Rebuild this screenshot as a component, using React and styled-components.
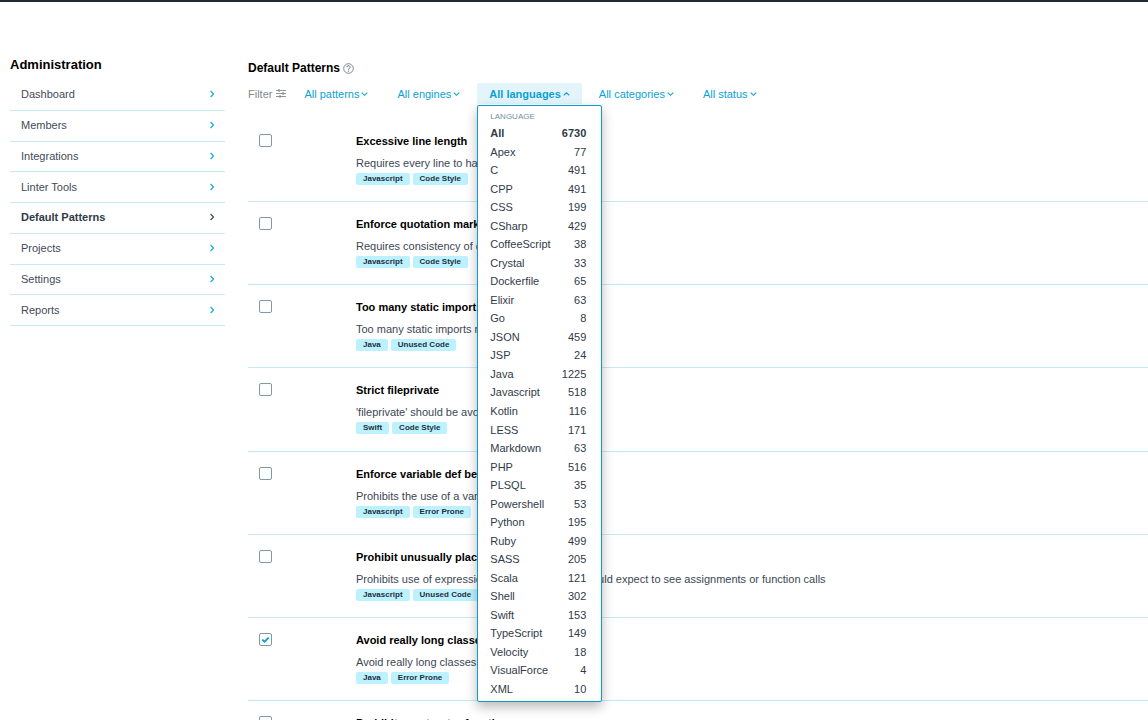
import React, { useState } from "react";
import styled, { createGlobalStyle } from "styled-components";

const GlobalStyle = createGlobalStyle`
  *, *::before, *::after { box-sizing: border-box; }
  html { scrollbar-width: none; }
  body {
    margin: 0;
    background: #fff;
    color: #3b4754;
    font-family: "Liberation Sans", Arial, Helvetica, sans-serif;
    font-size: 11px;
    line-height: 14px;
  }
`;

const Page = styled.div`
  border-top: 2px solid #1c2b36;
  display: flex;
  gap: 23px;
  padding: 54px 0 0 10px;
`;

const Sidebar = styled.aside`
  flex: 0 0 215px;
`;

const SidebarTitle = styled.h1`
  margin: 0 0 7px;
  color: #000;
  font-size: 13px;
  line-height: 17px;
`;

const Nav = styled.nav`
  display: grid;
  grid-auto-rows: 1fr;
  min-height: 246px;
`;

const NavLink = styled.a`
  display: flex;
  align-items: center;
  justify-content: space-between;
  padding: 0 10px 1px 11px;
  border-bottom: 1px solid #c8e9f6;
  color: ${(p) => (p.$active ? "#2e3b47" : "#3f4b58")};
  font-weight: ${(p) => (p.$active ? 700 : 400)};
  text-decoration: none;

  svg { color: ${(p) => (p.$active ? "#3f4b58" : "#18a9d8")}; }
`;

const Main = styled.main`
  flex: 1;
  min-width: 0;
`;

const MainHeader = styled.header`
  display: flex;
  align-items: center;
  gap: 3px;
  margin: 4px 0 7px;
`;

const MainTitle = styled.h2`
  margin: 0;
  color: #000;
  font-size: 12px;
  line-height: 16px;
`;

const HelpButton = styled.button`
  display: flex;
  padding: 0;
  border: 0;
  background: none;
  color: #5f6b75;
`;

const Filters = styled.div`
  display: flex;
  align-items: center;
  gap: 5px;
  margin-bottom: 15px;
`;

const FilterLabel = styled.span`
  display: flex;
  align-items: center;
  gap: 4px;
  margin-right: 1px;
  color: #84898e;
`;

const FilterSlot = styled.div`
  position: relative;
`;

const FilterButton = styled.button`
  display: flex;
  align-items: center;
  gap: 2px;
  height: 21px;
  padding: 0 12px;
  border: 0;
  border-radius: 2px 2px 0 0;
  background: ${(p) => (p.$open ? "#e4f4fb" : "transparent")};
  color: #0aa2d2;
  font: inherit;
  font-weight: ${(p) => (p.$open ? 700 : 400)};
  white-space: nowrap;
  cursor: pointer;
`;

const Menu = styled.div`
  position: absolute;
  z-index: 2;
  top: 22px;
  left: 0;
  width: 125px;
  padding: 4px 0 3px;
  border: 1px solid #0c9bca;
  border-radius: 2px;
  background: #fff;
  box-shadow: 0 5px 12px rgba(0, 0, 0, 0.28);
`;

const MenuHeading = styled.div`
  padding: 0 12px;
  color: #7390a0;
  font-size: 8px;
  line-height: 14px;
`;

const MenuList = styled.ul`
  display: grid;
  grid-auto-rows: 1fr;
  min-height: 574px;
  margin: 0;
  padding: 0;
  list-style: none;
`;

const MenuItem = styled.button`
  display: flex;
  align-items: center;
  justify-content: space-between;
  width: 100%;
  height: 100%;
  padding: 0 15px 0 12px;
  border: 0;
  background: none;
  color: #2f3b47;
  font: inherit;
  font-weight: ${(p) => (p.$selected ? 700 : 400)};
  cursor: pointer;
`;

const PatternList = styled.ul`
  display: grid;
  grid-auto-rows: 1fr;
  min-height: 665px;
  margin: 0;
  padding: 0;
  list-style: none;
`;

const Pattern = styled.li`
  display: flex;
  gap: 84px;
  padding: 15px 0 0 11px;
  border-bottom: 1px solid #c8e9f6;
`;

const CheckBoxFrame = styled.span`
  position: relative;
  flex: none;
  width: 13px;
  height: 13px;

  svg {
    position: absolute;
    inset: 0;
    pointer-events: none;
  }
`;

const CheckInput = styled.input`
  display: block;
  appearance: none;
  width: 13px;
  height: 13px;
  margin: 0;
  border: 1px solid #7f99a8;
  border-radius: 2px;
  background: #fff;
`;

const PatternTitle = styled.label`
  display: block;
  margin-bottom: 8px;
  color: #000;
  font-weight: 700;
`;

const Description = styled.p`
  margin: 0 0 3px;
`;

const Tags = styled.div`
  display: flex;
  gap: 3px;
`;

const Tag = styled.span`
  padding: 0 7px;
  border-radius: 2px;
  background: #bcf2ff;
  color: #1f2f3a;
  font-size: 8px;
  font-weight: 700;
  line-height: 12px;
`;

const NAV = ["Dashboard", "Members", "Integrations", "Linter Tools", "Default Patterns", "Projects", "Settings", "Reports"];

const FILTERS = ["patterns", "engines", "languages", "categories", "status"];

const LANGUAGES = [
  ["All", 6730], ["Apex", 77], ["C", 491], ["CPP", 491], ["CSS", 199], ["CSharp", 429],
  ["CoffeeScript", 38], ["Crystal", 33], ["Dockerfile", 65], ["Elixir", 63], ["Go", 8],
  ["JSON", 459], ["JSP", 24], ["Java", 1225], ["Javascript", 518], ["Kotlin", 116],
  ["LESS", 171], ["Markdown", 63], ["PHP", 516], ["PLSQL", 35], ["Powershell", 53],
  ["Python", 195], ["Ruby", 499], ["SASS", 205], ["Scala", 121], ["Shell", 302],
  ["Swift", 153], ["TypeScript", 149], ["Velocity", 18], ["VisualForce", 4], ["XML", 10],
];

const PATTERNS = [
  { title: "Excessive line length", text: "Requires every line to have", tags: ["Javascript", "Code Style"] },
  { title: "Enforce quotation marks", text: "Requires consistency of quotes", tags: ["Javascript", "Code Style"] },
  { title: "Too many static imports", text: "Too many static imports may", tags: ["Java", "Unused Code"] },
  { title: "Strict fileprivate", text: "'fileprivate' should be avoided.", tags: ["Swift", "Code Style"] },
  { title: "Enforce variable def before", text: "Prohibits the use of a variable", tags: ["Javascript", "Error Prone"] },
  {
    title: "Prohibit unusually placed code",
    text: "Prohibits use of expressions in lines where we would expect to see assignments or function calls",
    tags: ["Javascript", "Unused Code"],
  },
  { title: "Avoid really long classes", text: "Avoid really long classes.", tags: ["Java", "Error Prone"], on: true },
  { title: "Prohibit constructor functions", text: "Prohibits constructor functions", tags: ["Javascript", "Error Prone"] },
];

const ChevronRight = () => (
  <svg width="6" height="8" viewBox="0 0 6 8" fill="none" stroke="currentColor" strokeWidth="1.2" aria-hidden="true">
    <path d="M1.6 1 L4.5 4 L1.6 7" />
  </svg>
);

const Chevron = ({ up }) => (
  <svg width="7" height="6" viewBox="0 0 7 6" fill="none" stroke="currentColor" strokeWidth="1.1" aria-hidden="true">
    <path d={up ? "M0.7 4.4 L3.5 1.8 L6.3 4.4" : "M0.7 1.7 L3.5 4.3 L6.3 1.7"} />
  </svg>
);

const HelpIcon = () => (
  <svg width="11" height="11" viewBox="0 0 11 11" fill="none" stroke="currentColor" aria-hidden="true">
    <circle cx="5.5" cy="5.5" r="4.8" strokeWidth="0.8" />
    <path d="M3.9 4.4 A1.6 1.5 0 1 1 6.3 5.5 Q5.5 5.9 5.5 6.6" strokeWidth="1" />
    <circle cx="5.5" cy="8.1" r="0.6" fill="currentColor" stroke="none" />
  </svg>
);

const SlidersIcon = () => (
  <svg width="10" height="9" viewBox="0 0 10 9" fill="none" stroke="currentColor" strokeWidth="0.9" aria-hidden="true">
    <path d="M0 1.5 H10 M0 4.5 H10 M0 7.5 H10" />
    <path d="M3 0.2 V2.8 M7 3.2 V5.8 M4 6.2 V8.8" strokeWidth="1.4" />
  </svg>
);

const Tick = () => (
  <svg width="13" height="13" viewBox="0 0 13 13" fill="none" stroke="#0a9fd0" strokeWidth="1.8" aria-hidden="true">
    <path d="M3.3 6.6 L5.5 8.7 L9.7 4.6" />
  </svg>
);

function PatternRow({ item, id }) {
  const [checked, setChecked] = useState(Boolean(item.on));
  return (
    <Pattern>
      <CheckBoxFrame>
        <CheckInput id={id} type="checkbox" checked={checked} onChange={(e) => setChecked(e.target.checked)} />
        {checked && <Tick />}
      </CheckBoxFrame>
      <div>
        <PatternTitle htmlFor={id}>{item.title}</PatternTitle>
        <Description>{item.text}</Description>
        <Tags>
          {item.tags.map((t) => <Tag key={t}>{t}</Tag>)}
        </Tags>
      </div>
    </Pattern>
  );
}

export default function App() {
  const [open, setOpen] = useState("languages");
  const [language, setLanguage] = useState("All");
  return (
    <>
      <GlobalStyle />
      <Page>
        <Sidebar>
          <SidebarTitle>Administration</SidebarTitle>
          <Nav aria-label="Administration">
            {NAV.map((n) => (
              <NavLink key={n} href="#" $active={n === "Default Patterns"}>
                {n}
                <ChevronRight />
              </NavLink>
            ))}
          </Nav>
        </Sidebar>
        <Main>
          <MainHeader>
            <MainTitle>Default Patterns</MainTitle>
            <HelpButton type="button" aria-label="Help"><HelpIcon /></HelpButton>
          </MainHeader>
          <Filters>
            <FilterLabel>Filter <SlidersIcon /></FilterLabel>
            {FILTERS.map((f) => (
              <FilterSlot key={f}>
                <FilterButton
                  type="button"
                  $open={open === f}
                  aria-expanded={open === f}
                  onClick={() => setOpen(open === f ? null : f)}
                >
                  All {f}
                  <Chevron up={open === f} />
                </FilterButton>
                {f === "languages" && open === f && (
                  <Menu>
                    <MenuHeading>LANGUAGE</MenuHeading>
                    <MenuList>
                      {LANGUAGES.map(([name, count]) => (
                        <li key={name}>
                          <MenuItem type="button" $selected={name === language} onClick={() => setLanguage(name)}>
                            <span>{name}</span>
                            <span>{count}</span>
                          </MenuItem>
                        </li>
                      ))}
                    </MenuList>
                  </Menu>
                )}
              </FilterSlot>
            ))}
          </Filters>
          <PatternList>
            {PATTERNS.map((p, i) => <PatternRow key={p.title} item={p} id={`pattern-${i}`} />)}
          </PatternList>
        </Main>
      </Page>
    </>
  );
}
